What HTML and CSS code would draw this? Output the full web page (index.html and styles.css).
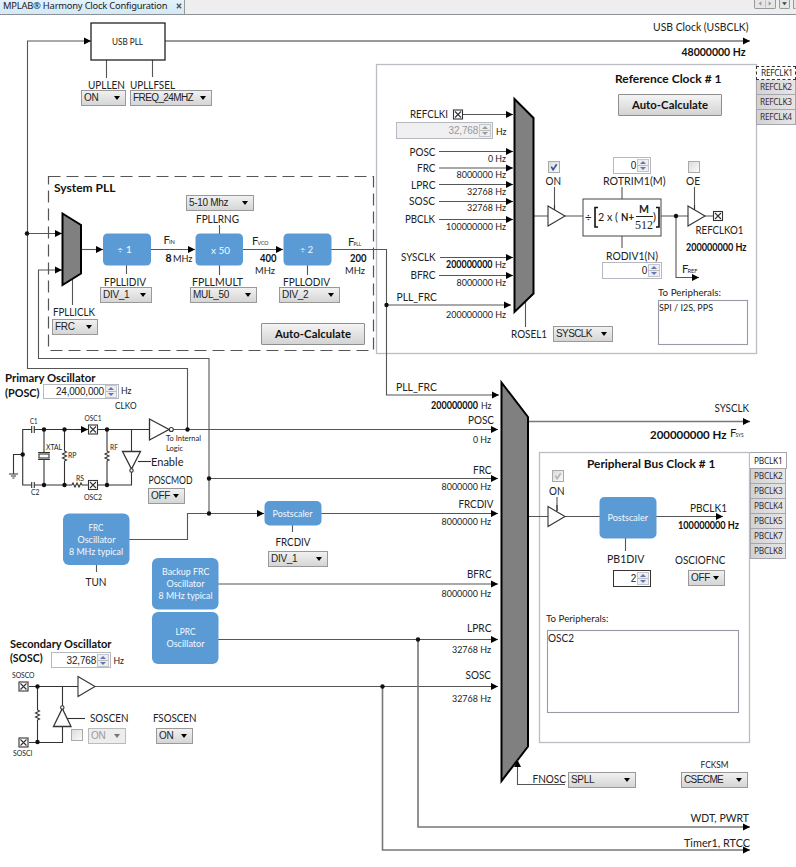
FILE: index.html
```html
<!DOCTYPE html>
<html lang="en">
<head>
<meta charset="utf-8">
<title>MPLAB Harmony Clock Configuration</title>
<link rel="stylesheet" href="styles.css">
<script src="labels.js" defer></script>
</head>
<body>
<header class="tabbar">
  <div class="doc-tab"><span>MPLAB® Harmony Clock Configuration</span>
    <svg class="close" viewBox="0 0 7 7"><path d="M1 1L6 6M6 1L1 6"/></svg></div>
  <div class="tab-tools">
    <i class="tool pair"><svg viewBox="0 0 22 8"><path d="M7 1L4 3.5L7 6ZM15 1L18 3.5L15 6Z" fill="#999"/><path d="M11.5 0V8" stroke="#bbb"/></svg></i>
    <i class="tool"><svg viewBox="0 0 11 8"><path d="M2.5 2H8.5L5.5 5.5Z" fill="#345"/></svg></i>
    <i class="tool cut"></i>
  </div>
</header>
<main class="canvas">
<svg class="diagram" viewBox="0 15 796 852">
  <defs>
    <marker id="arrow" markerUnits="userSpaceOnUse" markerWidth="8" markerHeight="8" refX="7" refY="4" orient="auto"><path d="M0 .5L7 4L0 7.5Z" fill="#000"/></marker>
    <g id="pad"><rect x=".5" y=".5" width="9" height="9" fill="#fff"/><path d="M2 2L8 8M8 2L2 8"/></g>
    <g id="buffer"><path d="M.5 -10V10L17.5 0Z" fill="#fff"/></g>
    <path id="zig" d="M0 0L2 1L-2 3L2 5L-2 7L2 9L0 10"/>
  </defs>

  <!-- panels -->
  <g class="panel">
    <rect x="376.500" y="64.500" width="380" height="289"/>
    <rect class="field" x="658.500" y="300.500" width="89" height="44"/>
    <rect x="539.500" y="452.500" width="210" height="290"/>
    <rect class="field" x="547.500" y="630.500" width="191" height="82"/>
  </g>
  <rect class="dashed" x="48.500" y="176.500" width="325" height="174"/>

  <!-- wiring -->
  <g class="wire">
    <path class="end" d="M187.500 429V368.500H27.500V41H91"/>
    <path class="end thick" d="M165 41H750"/>
    <path d="M106.500 60V78M152.500 60V77"/>
    <path class="end" d="M27 233.500H62"/>
    <path class="end" d="M209 514V358.500H38.500V270H62"/>
    <path class="end" d="M81 249.500H103"/>
    <path class="end" d="M151 249.500H195"/>
    <path class="end" d="M243 249.500H283"/>
    <path class="end" d="M331 249.500H386.500V395H499"/>
    <path d="M72.500 279V305M126.500 265V274M219.500 225V234M219.500 265V275M307.500 265V275"/>
    <path class="end" d="M463 114.500H513"/>
    <path class="end" d="M439 151.500H513"/>
    <path class="end" d="M439 168H513"/>
    <path class="end" d="M439 184.500H513"/>
    <path class="end" d="M439 201.500H513"/>
    <path class="end" d="M439 219.500H513"/>
    <path class="end" d="M440 257.500H513"/>
    <path class="end" d="M439 275.500H513"/>
    <path class="end" d="M387 305H511"/>
    <path d="M525.500 302V327M534 216H583M554.500 187V212M622 187V199M622 236V248M661 216H713M694.500 187V212"/>
    <path class="end" d="M676 216V277.500H699"/>
    <path class="end thick" d="M528 421.500H750"/>
    <path class="end" d="M173 429.500H498"/>
    <path class="end" d="M209 478.500H498"/>
    <path class="end" d="M320 513.500H498"/>
    <path class="end" d="M129 539.500H187.500V513.500H264"/>
    <path class="end" d="M218 584H498"/>
    <path class="end" d="M218 639.500H498"/>
    <path class="end" d="M95 686.500H498"/>
    <path class="end thick" d="M418 639V827H750"/>
    <path class="end thick" d="M382.500 686V850H750"/>
    <path d="M528 516.500H600M557 497V511M625.500 538V551M96.500 564V572M292.500 524V532"/>
    <path class="end" d="M656 516.500H723"/>
  </g>

  <!-- multiplexers -->
  <g class="mux">
    <path d="M62.500 213.500L81 225V273.500L62.500 285Z"/>
    <path d="M514.500 99L533.500 118V293.500L514.500 312Z"/>
    <path d="M501.500 382.500L528 417V746.500L501.500 781Z"/>
  </g>
  <path class="wire end" d="M565 784.500H517.500V760"/>

  <!-- crystal oscillator -->
  <g class="wire dark">
    <path d="M149 429.500H34.500M31.500 429.500H22.700V485H31.500M34.500 485H72M82 485H131.500V429.500M31.700 426V433M34.300 426V433M31.700 482V488M34.300 482V488"/>
    <path d="M22.700 454.500H13.500V474M9 474H18M11 476H16M12.500 478H14.500"/>
    <path d="M44 430V452M44 460V485M38 452.500H50M38 459.500H50"/><rect x="39" y="454" width="10" height="4" fill="#fff"/>
    <path d="M64.500 430V451M64.500 461V485M107 430V451M107 461V485"/>
    <use href="#zig" x="64.500" y="451"/><use href="#zig" x="107" y="451"/>
    <use href="#zig" transform="translate(72 485) rotate(-90)"/>
    <path class="end" d="M75 429.500H88"/>
    <use href="#pad" x="88" y="424.500"/><use href="#pad" x="88" y="480"/>
    <path d="M149.500 419V440L169 429.500Z" fill="#fff" stroke-width="1.300"/><circle cx="171.300" cy="429.500" r="2" fill="#fff"/>
    <path d="M122.500 451.500H140.500L131.500 469Z" fill="#fff" stroke-width="1.300"/><circle cx="131.500" cy="470.500" r="1.700" fill="#fff"/>
    <path d="M138 461.500H151"/>
    <path d="M29 686.500H78M37.500 686V710M37.500 720V742M62.500 686V742.500H29"/>
    <use href="#zig" x="37.500" y="710"/>
    <use href="#pad" x="18.500" y="681.500"/><use href="#pad" x="18.500" y="737.500"/>
    <path d="M53.500 726.500H71L62.300 708.500Z" fill="#fff" stroke-width="1.300"/><circle cx="62.300" cy="707.500" r="1.700" fill="#fff"/>
    <path d="M67 718.500H85"/>
    <use href="#pad" x="453" y="109.500"/><use href="#pad" x="713" y="211"/>
    <use href="#buffer" x="547.500" y="216"/><use href="#buffer" x="687.500" y="216"/>
    <use href="#buffer" x="547.500" y="516.500"/><use href="#buffer" x="77.500" y="686.500"/>
    <path d="M554.500 205V210M694.500 205V210M557 505V511"/>
  </g>
  <g class="dots">
    <circle cx="27" cy="233.500" r="2.200"/><circle cx="386.500" cy="305" r="2.200"/><circle cx="676" cy="216" r="2.200"/>
    <circle cx="22.700" cy="454.500" r="2.200"/><circle cx="44" cy="429.500" r="2.200"/><circle cx="64.500" cy="429.500" r="2.200"/>
    <circle cx="107" cy="429.500" r="2.200"/><circle cx="44" cy="485" r="2.200"/><circle cx="64.500" cy="485" r="2.200"/>
    <circle cx="107" cy="485" r="2.200"/><circle cx="187.500" cy="429.500" r="2.200"/><circle cx="209" cy="478.500" r="2.200"/>
    <circle cx="209" cy="513.500" r="2.200"/><circle cx="418" cy="639.500" r="2.200"/><circle cx="382.500" cy="686.500" r="2.200"/>
    <circle cx="37.500" cy="686.500" r="2.200"/><circle cx="37.500" cy="742" r="2.200"/>
  </g>

  <!-- blocks -->
  <g class="box"><rect x="91" y="23" width="74" height="37"/><rect class="thin" x="583" y="199" width="78" height="37"/></g>
  <g class="block">
    <rect x="103" y="233.500" width="48" height="32" rx="4.500"/><rect x="195.500" y="233.500" width="47.500" height="32" rx="4.500"/>
    <rect x="283.500" y="233.500" width="48" height="32" rx="4.500"/><rect x="63" y="513.500" width="66.500" height="51.500" rx="6"/>
    <rect x="152" y="558" width="66.500" height="51.500" rx="6"/><rect x="152" y="612" width="66.500" height="52" rx="6"/>
    <rect x="264.500" y="501" width="57" height="24.500" rx="5"/><rect x="599.500" y="497" width="57" height="41.500" rx="5"/>
  </g>
  <g class="t white">
    <text x="117" y="253" textLength="15">÷ 1</text><text x="211" y="253.500" textLength="19">x 50</text><text x="300" y="253" textLength="13">÷ 2</text>
    <text x="88.500" y="530.500" textLength="15">FRC</text><text x="77.500" y="542.500" textLength="38">Oscillator</text><text x="69" y="554.500" textLength="54">8 MHz typical</text>
    <text x="162" y="575" textLength="47.500">Backup FRC</text><text x="166.500" y="587" textLength="38">Oscillator</text><text x="158.500" y="599" textLength="54">8 MHz typical</text>
    <text x="175.500" y="635" textLength="20">LPRC</text><text x="166.500" y="647" textLength="38">Oscillator</text>
    <text x="272.500" y="516.500" textLength="40">Postscaler</text><text x="607.500" y="521" textLength="40.500">Postscaler</text>
  </g>

  <!-- labels -->
  <g class="t">
    <text class="sm" x="112" y="44.500" textLength="31">USB PLL</text>
    <text x="88" y="88.500" textLength="37">UPLLEN</text><text x="130" y="88.500" textLength="45">UPLLFSEL</text>
    <text x="653" y="30.500" textLength="95.500">USB Clock (USBCLK)</text>
    <text x="196" y="222.800" textLength="43">FPLLRNG</text>
    <text x="104" y="285.500" textLength="42">FPLLIDIV</text><text x="192" y="285.500" textLength="51">FPLLMULT</text>
    <text x="283" y="285.500" textLength="47">FPLLODIV</text><text x="53" y="316" textLength="42">FPLLICLK</text>
    <text x="163.500" y="244">F</text><text class="sub" x="169" y="244" textLength="6">IN</text>
    <text x="252" y="245">F</text><text class="sub" x="257.500" y="245" textLength="11">VCO</text>
    <text x="348" y="246">F</text><text class="sub" x="353.500" y="246" textLength="7.500">PLL</text>
    <text class="v" x="173" y="262" textLength="19.500">MHz</text><text class="v" x="255" y="273.500" textLength="20">MHz</text><text class="v" x="345" y="273.500" textLength="20">MHz</text>
    <text class="v" x="121" y="393.500" textLength="10.500">Hz</text><text class="v" x="115" y="409" textLength="21.500">CLKO</text>
    <text x="151" y="465.500" textLength="32.500">Enable</text><text x="148.500" y="483.500" textLength="44">POSCMOD</text>
    <text x="410" y="118" textLength="38">REFCLKI</text><text class="v" x="496" y="134.500" textLength="10.500">Hz</text>
    <text x="409.500" y="156" textLength="26">POSC</text><text x="417" y="172" textLength="18.500">FRC</text>
    <text x="411" y="188.500" textLength="24.500">LPRC</text><text x="409" y="205" textLength="26">SOSC</text>
    <text x="405" y="223" textLength="30">PBCLK</text><text x="401" y="261" textLength="34.500">SYSCLK</text>
    <text x="410.500" y="279" textLength="25">BFRC</text><text x="396.500" y="301" textLength="40.500">PLL_FRC</text>
    <text class="v" x="488" y="161.500" textLength="18">0 Hz</text><text class="v" x="456.500" y="178" textLength="49.500">8000000 Hz</text>
    <text class="v" x="467" y="194.500" textLength="39">32768 Hz</text><text class="v" x="467" y="211" textLength="39">32768 Hz</text>
    <text class="v" x="446" y="230" textLength="60">100000000 Hz</text><text class="v" x="495" y="268" textLength="11">Hz</text>
    <text class="v" x="456.500" y="286" textLength="49.500">8000000 Hz</text><text class="v" x="446" y="318" textLength="60">200000000 Hz</text>
    <text x="511" y="338" textLength="36">ROSEL1</text>
    <text x="545.500" y="185" textLength="15.500">ON</text><text x="603" y="185" textLength="62.500">ROTRIM1(M)</text><text x="686" y="185" textLength="14">OE</text>
    <text x="606" y="260" textLength="52">RODIV1(N)</text><text x="695.500" y="234" textLength="48">REFCLKO1</text>
    <text x="682" y="272.500">F</text><text class="sub" x="687.500" y="272.500" textLength="10">REF</text>
    <text class="v" x="658" y="296" textLength="63">To Peripherals:</text><text class="v" x="659" y="310.500" textLength="54">SPI / I2S, PPS</text>
    <text x="714.500" y="412" textLength="34.500">SYSCLK</text><text x="730" y="437">F</text><text class="sub" x="735.500" y="437" textLength="8">SYS</text>
    <text x="396" y="391" textLength="41">PLL_FRC</text><text class="v" x="481" y="408.500" textLength="10.500">Hz</text>
    <text x="468" y="424" textLength="26">POSC</text><text class="v" x="473" y="442.500" textLength="18">0 Hz</text>
    <text x="473" y="474" textLength="18.500">FRC</text><text class="v" x="441.500" y="489.500" textLength="49.500">8000000 Hz</text>
    <text x="458.500" y="507.500" textLength="35">FRCDIV</text><text class="v" x="441.500" y="524.500" textLength="49.500">8000000 Hz</text>
    <text x="467" y="577.500" textLength="24.500">BFRC</text><text class="v" x="441.500" y="596.500" textLength="49.500">8000000 Hz</text>
    <text x="467" y="631.500" textLength="24.500">LPRC</text><text class="v" x="452" y="652.500" textLength="39">32768 Hz</text>
    <text x="465.500" y="678.500" textLength="25.500">SOSC</text><text class="v" x="452" y="701.500" textLength="39">32768 Hz</text>
    <text x="549" y="494.500" textLength="15.500">ON</text><text x="690" y="512" textLength="37">PBCLK1</text>
    <text x="607" y="563" textLength="37.500">PB1DIV</text><text x="675" y="563.500" textLength="50.500">OSCIOFNC</text>
    <text class="v" x="546" y="622" textLength="62.500">To Peripherals:</text><text x="548" y="642" textLength="26">OSC2</text>
    <text x="532.500" y="783" textLength="33.500">FNOSC</text><text class="v" x="700.500" y="768" textLength="28">FCKSM</text>
    <text x="690.500" y="821.500" textLength="58.500">WDT, PWRT</text><text x="684" y="846.500" textLength="66">Timer1, RTCC</text>
    <text x="85.500" y="586" textLength="21">TUN</text><text x="275.500" y="546" textLength="35">FRCDIV</text>
    <text class="v" x="113.500" y="663.500" textLength="10.500">Hz</text>
    <text x="90" y="722" textLength="38.500">SOSCEN</text><text x="153" y="722" textLength="43.500">FSOSCEN</text>
  </g>
  <g class="t tiny">
    <text x="30" y="424" textLength="7.500">C1</text><text x="31" y="494.500" textLength="8.500">C2</text><text x="46" y="450" textLength="16">XTAL</text>
    <text x="68" y="457.500" textLength="8.500">RP</text><text x="84.500" y="421" textLength="17">OSC1</text><text x="84" y="499.500" textLength="18">OSC2</text>
    <text x="110" y="450" textLength="8">RF</text><text x="76" y="480.500" textLength="8">RS</text>
    <text x="166" y="440.500" textLength="35">To Internal</text><text x="166" y="450.500" textLength="17">Logic</text>
    <text x="12" y="678" textLength="22.500">SOSCO</text><text x="13" y="756" textLength="19.500">SOSCI</text>
  </g>
  <g class="t bold">
    <text class="h" x="54" y="192" textLength="61.500">System PLL</text>
    <text class="h" x="5" y="382" textLength="90.500">Primary Oscillator</text><text class="h" x="5" y="396.500" textLength="34.500">(POSC)</text>
    <text class="h" x="10" y="648" textLength="101.500">Secondary Oscillator</text><text class="h" x="10" y="662" textLength="32.500">(SOSC)</text>
    <text class="h" x="615" y="83" textLength="106.500">Reference Clock # 1</text><text class="h" x="587" y="467.500" textLength="128.500">Peripheral Bus Clock # 1</text>
    <text x="681.500" y="55.500" textLength="64">48000000 Hz</text><text class="h" x="650" y="438.500" textLength="76.500">200000000 Hz</text>
    <text x="165.500" y="262">8</text><text x="260" y="262" textLength="16.500">400</text><text x="350" y="262" textLength="16.500">200</text>
    <text x="446" y="268" textLength="46.500">200000000</text><text x="431" y="408.500" textLength="47">200000000</text>
    <text x="686" y="251" textLength="60.500">200000000 Hz</text><text x="678" y="528.500" textLength="61">100000000 Hz</text>
  </g>
  <g class="t formula">
    <text x="585" y="220.500">÷</text><text x="598" y="221" textLength="20">2 x (</text>
    <text class="b" x="621" y="221" textLength="13">N+</text><text class="b" x="639" y="213" textLength="10">M</text>
    <text class="serif" x="635" y="229" textLength="18">512</text><text x="653" y="221">)</text>
  </g>
  <path class="frac" d="M636 216.500H653"/>
  <path class="bracket" d="M598 207.500H595V227H598M656 207.500H659V227H656"/>
</svg>

<div class="select s1">ON</div><div class="select s2">FREQ_24MHZ</div><div class="select s3">5-10 Mhz</div>
<div class="select s4">DIV_1</div><div class="select s5">MUL_50</div><div class="select s6">DIV_2</div>
<div class="select s7">FRC</div><div class="select s8">SYSCLK</div><div class="select s9">OFF</div>
<div class="select s10">DIV_1</div><div class="select s11 disabled">ON</div><div class="select s12">ON</div>
<div class="select s13">SPLL</div><div class="select s14">CSECME</div><div class="select s15">OFF</div>

<div class="spin p1"><span>24,000,000</span><i></i></div>
<div class="spin p2 disabled"><span>32,768</span><i></i></div>
<div class="spin p3"><span>0</span><i></i></div>
<div class="spin p4"><span>0</span><i></i></div>
<div class="spin p5"><span>32,768</span><i></i></div>
<div class="spin p6 focus"><span>2</span><i></i></div>

<div class="check c1"><svg viewBox="0 0 11 11"><path d="M2.500 5L4.500 8.500L8.500 2.500"/></svg></div>
<div class="check c2"></div>
<div class="check c3 off"><svg viewBox="0 0 11 11"><path d="M2.500 5L4.500 8.500L8.500 2.500"/></svg></div>
<div class="check c4"></div>

<div class="button b1"><span>Auto-Calculate</span></div>
<div class="button b2"><span>Auto-Calculate</span></div>

<nav class="side ref"><div class="active">REFCLK1</div><div>REFCLK2</div><div>REFCLK3</div><div>REFCLK4</div></nav>
<nav class="side pb"><div class="active">PBCLK1</div><div>PBCLK2</div><div>PBCLK3</div><div>PBCLK4</div><div>PBCLK5</div><div>PBCLK7</div><div>PBCLK8</div></nav>
</main>
</body>
</html>
```
FILE: labels.js
```js
// Condense the glyphs of fitted labels together with their spacing.
document.querySelectorAll("text[textLength]").forEach(function (label) {
  label.setAttribute("lengthAdjust", "spacingAndGlyphs");
});
```
FILE: styles.css
```css
* { box-sizing: border-box; }
body { margin: 0; width: 796px; height: 867px; overflow: hidden; background: #fff; color: #222; font-family: Lato, "Open Sans", sans-serif; }

.tabbar { display: flex; justify-content: space-between; height: 15px; background: #eee; border-bottom: 1px solid #8c9097; }
.doc-tab { display: flex; align-items: center; gap: 8px; width: 185px; height: 14px; padding: 0 2px 2px 3px; background: linear-gradient(#e3f2fb, #d3e9f6); border-right: 1px solid #999; font: 9.4px/12px "Noto Sans", sans-serif; white-space: nowrap; color: #222; }
.doc-tab span { flex: none; width: 165px; letter-spacing: -.22px; }
.close { width: 6px; height: 6px; flex: none; stroke: #555; stroke-width: 1.6; }
.tab-tools { display: flex; gap: 3px; }
.tool { width: 11px; height: 9px; border: 1px solid #999; border-top: 0; border-radius: 0 0 2px 2px; background: #e6e6e6; }
.tool.pair { width: 22px; }
.tool.cut { width: 3px; border-right: 0; }
.tool svg { display: block; width: 100%; height: 8px; }

.canvas { position: relative; width: 796px; height: 852px; }
.diagram { display: block; width: 796px; height: 852px; }

.panel rect { fill: none; stroke: #bcbcc4; stroke-width: 1.3; }
.panel .field { stroke: #9a9aa4; stroke-width: 1.1; }
.dashed { fill: none; stroke: #555; stroke-width: 1.2; stroke-dasharray: 12 6; }
.wire { fill: none; stroke: #555; stroke-width: 1.1; }
.wire.dark { stroke: #333; }
.end { marker-end: url(#arrow); }
.thick { stroke: #777; stroke-width: 1.6; }
.mux path { fill: #808080; stroke: #000; stroke-width: 2; }
.dots { fill: #111; }
.box rect { fill: #fff; stroke: #222; stroke-width: 1.3; }
.box .thin { stroke: #444; stroke-width: 1; }
.block { fill: #5b9bd5; }
.frac { stroke: #222; fill: none; }
.bracket { stroke: #111; fill: none; stroke-width: 1.6; }

.t { font-family: Lato, sans-serif; font-size: 11.3px; fill: #222; }
.t .v { font-size: 10.4px; }
.t .sm { font-size: 9.3px; }
.t .sub { font-size: 6px; }
.t.white { fill: #f4f9ff; font-size: 9.7px; }
.t.tiny { font-size: 8px; }
.t.bold { font-size: 10.5px; font-weight: 700; fill: #111; }
.t .h { font-size: 11.5px; }
.t .b { font-weight: 700; }
.t .serif { font-family: "Liberation Serif", serif; font-size: 12px; }

.select { position: absolute; height: 16px; padding-left: 2px; border: 1px solid #999; background: linear-gradient(#f1f1f1, #d5d5d5); font: 10px/14px "Liberation Sans", sans-serif; letter-spacing: -.3px; color: #222; white-space: nowrap; }
.select::after { content: ""; position: absolute; right: 5px; top: 5px; border: 3.5px solid transparent; border-top: 4px solid #000; border-bottom: 0; }
.select.disabled { color: #999; border-color: #bbb; background: #ededed; }
.select.disabled::after { border-top-color: #777; }
.s1 { left: 81px; top: 75px; width: 45px; }
.s2 { left: 130px; top: 75px; width: 82px; letter-spacing: -.6px; }
.s3 { left: 186px; top: 180px; width: 68px; }
.s4 { left: 100px; top: 272px; width: 52px; }
.s5 { left: 190px; top: 272px; width: 67px; }
.s6 { left: 279px; top: 272px; width: 61px; }
.s7 { left: 52px; top: 304px; width: 46px; }
.s8 { left: 553px; top: 311px; width: 60px; letter-spacing: -.6px; }
.s9 { left: 148px; top: 473px; width: 37px; }
.s10 { left: 268px; top: 536px; width: 60px; }
.s11 { left: 88px; top: 713px; width: 38px; }
.s12 { left: 156px; top: 713px; width: 37px; }
.s13 { left: 568px; top: 757px; width: 68px; }
.s14 { left: 681px; top: 757px; width: 67px; letter-spacing: -.6px; }
.s15 { left: 688px; top: 555px; width: 37px; }

.spin { position: absolute; display: flex; align-items: center; justify-content: flex-end; gap: 1px; height: 16px; padding-right: 1px; border: 1px solid #b5b8c0; background: #fff; font: 10px/13px "Liberation Sans", sans-serif; letter-spacing: -.2px; color: #222; }
.spin i { position: relative; width: 12px; height: 13px; border: 1px solid #c3c6cc; background: linear-gradient(#eee 46%, #bbb 46%, #bbb 54%, #eee 54%); }
.spin i::before, .spin i::after { content: ""; position: absolute; left: 2px; border: 3px solid transparent; }
.spin i::before { top: 1px; border-top: 0; border-bottom: 3px solid #6076b8; }
.spin i::after { bottom: 1px; border-bottom: 0; border-top: 3px solid #6076b8; }
.spin.disabled { background: #f0f0f0; color: #999; }
.spin.disabled i::before { border-bottom-color: #999; }
.spin.disabled i::after { border-top-color: #999; }
.spin.focus { border-color: #333; }
.p1 { left: 43px; top: 369px; width: 76px; height: 15px; }
.p2 { left: 396px; top: 107px; width: 97px; height: 17px; }
.p3 { left: 613px; top: 142px; width: 38px; height: 17px; }
.p4 { left: 602px; top: 247px; width: 60px; height: 17px; }
.p5 { left: 51px; top: 637px; width: 60px; }
.p6 { left: 613px; top: 555px; width: 38px; height: 17px; }

.check { position: absolute; width: 12px; height: 12px; border: 1px solid #aaa; background: linear-gradient(135deg, #dcdcdc, #fafafa); }
.check svg { display: block; width: 10px; height: 10px; fill: none; stroke: #35559c; stroke-width: 1.8; }
.check.off svg { stroke: #b5b5b5; }
.c1 { left: 548px; top: 146px; }
.c2 { left: 688px; top: 146px; }
.c3 { left: 552px; top: 455px; }
.c4 { left: 71px; top: 714px; }

.button { position: absolute; display: flex; align-items: center; justify-content: center; width: 104px; height: 22px; border: 1px solid #8e8e8e; border-radius: 1px; background: linear-gradient(#f4f4f4, #d3d3d3); font: 700 11.3px/14px Lato, sans-serif; color: #111; letter-spacing: .05px; }
.b1 { left: 261px; top: 308px; }
.b2 { left: 618px; top: 79px; }

.side { position: absolute; display: flex; flex-direction: column; align-items: flex-start; font: 8.3px/13px "Noto Sans", sans-serif; color: #3a2a35; }
.side div { height: 15px; border: 1px solid #a5a5ad; border-top-width: 0; padding-left: 3px; background: linear-gradient(90deg, #d2d2d4, #e6e6e6); letter-spacing: -.25px; }
.side .active { background: #fff; color: #222; }
.ref { left: 756px; top: 51px; }
.ref div { width: 40px; }
.ref .active { border: 1px dashed #333; padding-left: 4px; height: 14px; line-height: 12px; }
.pb { left: 750px; top: 437px; }
.pb div { width: 36px; }
.pb .active { width: 37px; height: 17px; padding-left: 4px; border-top-width: 1px; border-left: 0; line-height: 15px; }
```
